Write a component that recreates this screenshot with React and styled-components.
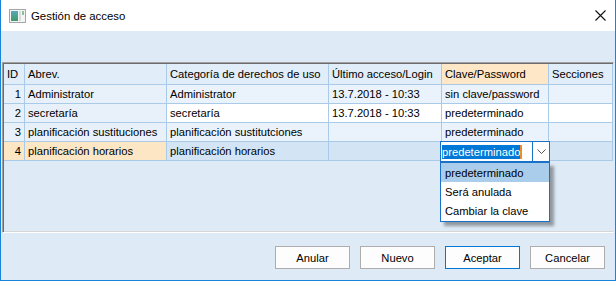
import React from 'react';
import styled, { createGlobalStyle, css } from 'styled-components';

const GlobalStyle = createGlobalStyle`
  html, body { margin: 0; padding: 0; background: #ffffff; }
  body { font-family: "Liberation Sans", Arial, sans-serif; font-size: 11.2px; color: #000; }
`;

const Window = styled.div`
  width: 616px;
  height: 281px;
  box-sizing: border-box;
  border: 1px solid #1883d7;
  border-top: none;
  background: #deeaf5;
  display: flex;
  flex-direction: column;
`;

const TitleBar = styled.div`
  height: 31px;
  flex: none;
  background: #ffffff;
  display: flex;
  align-items: center;
  padding-left: 8px;
  padding-right: 9px;
`;

const Title = styled.span`
  margin-left: 5px;
  font-size: 11.4px;
  flex: 1;
`;

const Body = styled.div`
  flex: 1;
  display: flex;
  flex-direction: column;
  padding-top: 31px;
  padding-left: 1px;
  padding-right: 1px;
`;

const GridBox = styled.div`
  height: 171px;
  box-sizing: border-box;
  border-top: 1px solid #a0a0a0;
  border-left: 1px solid #a0a0a0;
  border-right: 1px solid #e6e6e6;
  border-bottom: 1px solid #ffffff;
  box-shadow: inset 1px 1px 0 #6d6d6d, inset 0 -1px 0 #d6d6d6;
  padding: 1px 0 0 1px;
`;

const Grid = styled.div`
  display: grid;
  grid-template-columns: 21px 142px 162px 113px 107px 1fr;
  grid-auto-rows: 19px;
  grid-template-rows: 21px;
`;

const cellBase = css`
  box-sizing: border-box;
  border-right: 1px solid #a9cbe9;
  border-bottom: 1px solid #a9cbe9;
  padding: 0 3px;
  display: flex;
  align-items: center;
  white-space: nowrap;
  overflow: visible;
  position: relative;
`;

const HeadCell = styled.div`
  ${cellBase}
  background: ${p => (p.$active ? '#fde7c6' : '#e1edf8')};
`;

const rowBg = p => {
  if (p.$current) return p.$fixed ? '#fde6c4' : '#d3e5f5';
  if (p.$fixed) return '#e8f1fa';
  return p.$odd ? '#eaf3fb' : '#ffffff';
};

const Cell = styled.div`
  ${cellBase}
  background: ${rowBg};
  justify-content: ${p => (p.$num ? 'flex-end' : 'flex-start')};
`;

const Editor = styled.div`
  position: absolute;
  left: -2px;
  top: -1px;
  width: 110px;
  height: 21px;
  box-sizing: border-box;
  border: 1px solid #1a72c8;
  background: #ffffff;
  display: flex;
  z-index: 2;
`;

const EditorText = styled.div`
  flex: 1;
  display: flex;
  align-items: center;
  padding-left: 1px;
`;

const Selected = styled.span`
  background: #0078d7;
  color: #ffffff;
  line-height: 14px;
  border-right: 2px solid #f08a24;
`;

const DropButton = styled.div`
  width: 16px;
  border-left: 1px solid #1a72c8;
  display: flex;
  align-items: center;
  justify-content: center;
`;

const List = styled.div`
  position: absolute;
  left: -2px;
  top: 20px;
  width: 110px;
  box-sizing: border-box;
  border: 1px solid #1a72c8;
  background: #ffffff;
  box-shadow: 4px 4px 3px rgba(0, 0, 0, 0.35);
  z-index: 3;
  padding-bottom: 1px;
`;

const ListItem = styled.div`
  height: 19px;
  display: flex;
  align-items: center;
  padding-left: 4px;
  background: ${p => (p.$hover ? '#a9cdeb' : 'transparent')};
`;

const Footer = styled.div`
  flex: 1;
  display: flex;
  justify-content: flex-end;
  align-items: flex-start;
  gap: 10px;
  padding: 13px 9px 0 0;
`;

const Button = styled.button`
  width: 75px;
  height: 23px;
  box-sizing: border-box;
  border: 1px solid ${p => (p.$default ? '#0078d7' : '#adadad')};
  background: #fdfdfd;
  font-family: inherit;
  font-size: 11.2px;
  color: #000;
  padding: 0;
`;

const AppIcon = () => (
  <svg width="17" height="14" viewBox="0 0 17 14">
    <defs>
      <linearGradient id="pane" x1="0" y1="0" x2="0" y2="1">
        <stop offset="0" stopColor="#5aa7b8" />
        <stop offset="1" stopColor="#3f9a6a" />
      </linearGradient>
    </defs>
    <rect x="0.5" y="0.5" width="16" height="13" fill="#f4f4f4" stroke="#a6a6a6" />
    <rect x="2" y="2" width="7" height="10" fill="url(#pane)" />
    <rect x="10" y="2" width="2" height="10" fill="#d8dde0" />
    <rect x="13" y="2" width="2" height="4" fill="#8fbf9a" />
  </svg>
);

const CloseIcon = () => (
  <svg width="11" height="11" viewBox="0 0 11 11">
    <path d="M0.5 0.5 L10.5 10.5 M10.5 0.5 L0.5 10.5" stroke="#111" strokeWidth="1.1" />
  </svg>
);

const Chevron = () => (
  <svg width="9" height="5" viewBox="0 0 9 5">
    <path d="M0.5 0.5 L4.5 4.5 L8.5 0.5" fill="none" stroke="#555" strokeWidth="1" />
  </svg>
);

const headers = ['ID', 'Abrev.', 'Categoría de derechos de uso', 'Último acceso/Login', 'Clave/Password', 'Secciones'];

const rows = [
  { id: 1, abrev: 'Administrator', cat: 'Administrator', last: '13.7.2018 - 10:33', pwd: 'sin clave/password' },
  { id: 2, abrev: 'secretaría', cat: 'secretaría', last: '13.7.2018 - 10:33', pwd: 'predeterminado' },
  { id: 3, abrev: 'planificación sustituciones', cat: 'planificación sustitutciones', last: '', pwd: 'predeterminado' },
  { id: 4, abrev: 'planificación horarios', cat: 'planificación horarios', last: '', pwd: '', editing: true },
];

const options = ['predeterminado', 'Será anulada', 'Cambiar la clave'];

const App = () => {
  return (
    <>
      <GlobalStyle />
      <Window>
        <TitleBar>
          <AppIcon />
          <Title>Gestión de acceso</Title>
          <CloseIcon />
        </TitleBar>
        <Body>
          <GridBox>
            <Grid>
              {headers.map((h, i) => (
                <HeadCell key={h} $active={i === 4}>{h}</HeadCell>
              ))}
              {rows.map((r, i) => {
                const odd = i % 2 === 0;
                const cur = !!r.editing;
                return (
                  <React.Fragment key={r.id}>
                    <Cell $fixed $num $odd={odd} $current={cur}>{r.id}</Cell>
                    <Cell $fixed $odd={odd} $current={cur}>{r.abrev}</Cell>
                    <Cell $odd={odd} $current={cur}>{r.cat}</Cell>
                    <Cell $odd={odd} $current={cur}>{r.last}</Cell>
                    <Cell $odd={odd} $current={cur}>
                      {r.pwd}
                      {cur && (
                        <>
                          <Editor>
                            <EditorText><Selected>predeterminado</Selected></EditorText>
                            <DropButton><Chevron /></DropButton>
                          </Editor>
                          <List>
                            {options.map((o, k) => (
                              <ListItem key={o} $hover={k === 0}>{o}</ListItem>
                            ))}
                          </List>
                        </>
                      )}
                    </Cell>
                    <Cell $odd={odd} $current={cur} />
                  </React.Fragment>
                );
              })}
            </Grid>
          </GridBox>
          <Footer>
            <Button>Anular</Button>
            <Button>Nuevo</Button>
            <Button $default>Aceptar</Button>
            <Button>Cancelar</Button>
          </Footer>
        </Body>
      </Window>
    </>
  );
};

export default App;
